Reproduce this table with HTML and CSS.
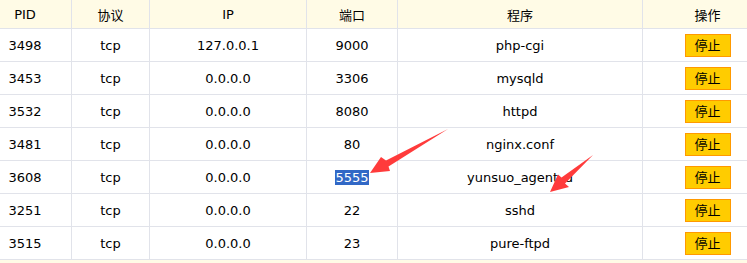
FILE: index.html
```html
<!DOCTYPE html>
<html>
<head>
<meta charset="utf-8">
<link rel="stylesheet" href="styles.css">
</head>
<body>
<div class="page">
<table class="ports">
<colgroup>
<col class="c-pid"><col class="c-proto"><col class="c-ip"><col class="c-port"><col class="c-prog"><col class="c-op">
</colgroup>
<thead>
<tr><th>PID</th><th>协议</th><th>IP</th><th>端口</th><th>程序</th><th>操作</th></tr>
</thead>
<tbody>
<tr><td>3498</td><td>tcp</td><td>127.0.0.1</td><td>9000</td><td>php-cgi</td><td><button class="stop">停止</button></td></tr>
<tr><td>3453</td><td>tcp</td><td>0.0.0.0</td><td>3306</td><td>mysqld</td><td><button class="stop">停止</button></td></tr>
<tr><td>3532</td><td>tcp</td><td>0.0.0.0</td><td>8080</td><td>httpd</td><td><button class="stop">停止</button></td></tr>
<tr><td>3481</td><td>tcp</td><td>0.0.0.0</td><td>80</td><td>nginx.conf</td><td><button class="stop">停止</button></td></tr>
<tr><td>3608</td><td>tcp</td><td>0.0.0.0</td><td><span class="sel">5555</span></td><td>yunsuo_agent_d</td><td><button class="stop">停止</button></td></tr>
<tr><td>3251</td><td>tcp</td><td>0.0.0.0</td><td>22</td><td>sshd</td><td><button class="stop">停止</button></td></tr>
<tr><td>3515</td><td>tcp</td><td>0.0.0.0</td><td>23</td><td>pure-ftpd</td><td><button class="stop">停止</button></td></tr>
</tbody>
</table>
<div class="next"></div>
<svg class="arrows" width="747" height="263" viewBox="0 0 747 263">
<polygon fill="#ff3b3b" points="448,129 388.5,166.5 390,171 370,173 381,157 386,160.5"/>
<polygon fill="#ff3b3b" points="593,155 565,183.5 569,187 550,192 558,174.5 561.5,177.5"/>
</svg>
</div>
</body>
</html>
```
FILE: styles.css
```css
html, body {
  margin: 0;
  padding: 0;
  background: #ffffff;
}
.page {
  position: relative;
  width: 747px;
  height: 263px;
  overflow: hidden;
  font-family: "DejaVu Sans", "Noto Sans CJK SC", sans-serif;
  font-size: 13px;
  color: #000;
}
.ports {
  border-collapse: collapse;
  table-layout: fixed;
  width: 794px;
  margin-left: -22px;
}
.c-pid { width: 93px; }
.c-proto { width: 78px; }
.c-ip { width: 157px; }
.c-port { width: 91px; }
.c-prog { width: 245px; }
.c-op { width: 130px; }
.ports th, .ports td {
  border: 1px solid #e1e3ea;
  text-align: center;
  vertical-align: middle;
  padding: 0;
  font-weight: normal;
  white-space: nowrap;
}
.ports th {
  height: 28px;
  background: #fffbe6;
  border-top: none;
}
.ports td {
  height: 32px;
}
.sel {
  background: #3168c6;
  color: #fff;
}
.stop {
  width: 46px;
  height: 23px;
  margin: 0;
  padding: 0;
  background: #ffcc00;
  border: 1px solid #ff9900;
  font-family: "Noto Sans CJK SC", sans-serif;
  font-size: 13px;
  color: #000;
  line-height: 20px;
}
.next {
  height: 4px;
  background: #fffbe6;
}
.arrows {
  position: absolute;
  left: 0;
  top: 0;
}
```
